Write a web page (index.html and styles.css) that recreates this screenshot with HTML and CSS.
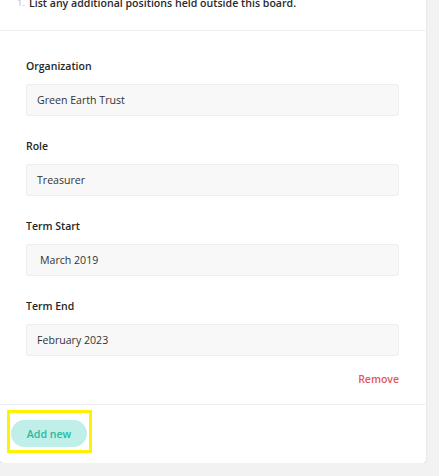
FILE: index.html
```html
<!DOCTYPE html>
<html lang="en">
<head>
    <meta charset="UTF-8">
    <meta name="viewport" content="width=device-width, initial-scale=1.0">
    <title>Board positions</title>
    <link rel="stylesheet" href="styles.css">
</head>
<body>
    <div class="card">
        <!-- 问题标题 -->
        <div class="question">
            <span class="num">1.</span>
            <span class="title">List any additional positions held outside this board.</span>
        </div>
        <!-- 表单字段 -->
        <div class="entry">
            <div class="field">
                <label class="label">Organization</label>
                <div class="input">Green Earth Trust</div>
            </div>
            <div class="field">
                <label class="label">Role</label>
                <div class="input">Treasurer</div>
            </div>
            <div class="field">
                <label class="label">Term Start</label>
                <div class="input date">March 2019</div>
            </div>
            <div class="field">
                <label class="label">Term End</label>
                <div class="input">February 2023</div>
            </div>
            <div class="actions">
                <span class="remove">Remove</span>
            </div>
        </div>
        <!-- 底部按钮 -->
        <div class="footer">
            <div class="highlight">
                <button class="add">Add new</button>
            </div>
        </div>
    </div>
</body>
</html>
```

FILE: styles.css
```css
body{
    margin: 0;
    background: #f2f2f2;
    font-family: "Open Sans", "Liberation Sans", sans-serif;
    color: #333333;
}
.card{
    width: 426px;
    margin-top: -6px;
    background: #ffffff;
    border-radius: 0 0 4px 4px;
    box-shadow: 0 1px 2px rgba(0,0,0,0.12);
}
/* 标题 */
.question{
    display: flex;
    gap: 4px;
    padding: 0 17px 18px;
    font-size: 10.6px;
    line-height: 18px;
    border-bottom: 1px solid #f0f0f0;
}
.num{
    color: #b5b5b5;
    font-size: 9.5px;
}
.title{
    font-weight: 600;
    color: #2a2a2a;
}
/* 字段 */
.entry{
    padding: 27px 27px 16px 26px;
    border-bottom: 1px solid #efefef;
}
.field{
    display: flex;
    flex-direction: column;
    gap: 10px;
    margin-bottom: 22px;
}
.label{
    font-size: 10.5px;
    line-height: 16px;
    font-weight: 600;
    color: #262626;
}
.input{
    height: 30px;
    line-height: 30px;
    padding: 0 10px;
    background: #f8f8f8;
    border: 1px solid #eeeeee;
    border-radius: 3px;
    font-size: 10.6px;
    color: #333333;
}
.input.date{
    padding-left: 13px;
}
.actions{
    display: flex;
    justify-content: flex-end;
    margin-top: -8px;
}
.remove{
    font-size: 10.5px;
    line-height: 18px;
    font-weight: 600;
    color: #e5575a;
    cursor: pointer;
}
/* 底部 */
.footer{
    padding: 5px 7px 10px;
    display: flex;
}
.highlight{
    border: 3px solid #fff200;
    padding: 7px 2px 3px 1px;
}
.add{
    width: 76px;
    height: 27px;
    border: none;
    border-radius: 14px;
    background: #c0eee8;
    color: #25bba4;
    font-family: inherit;
    font-size: 10.6px;
    font-weight: 600;
    padding: 0;
    cursor: pointer;
}
```
